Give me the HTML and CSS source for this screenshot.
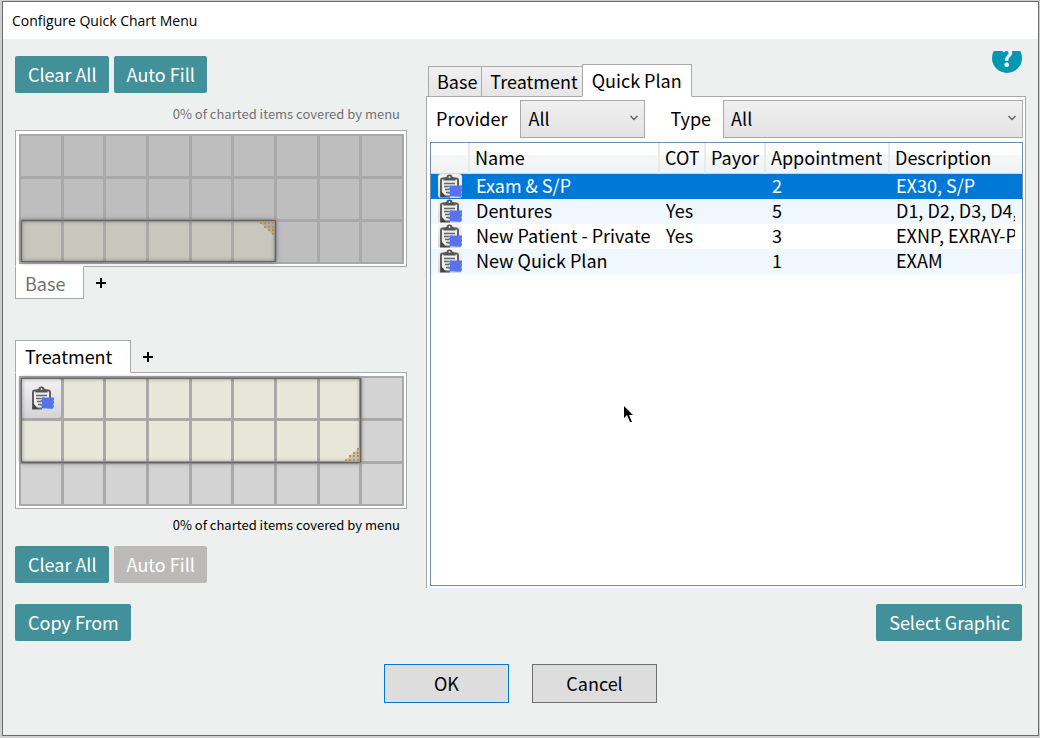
FILE: index.html
```html
<!DOCTYPE html>
<html lang="en">
<head>
  <meta charset="UTF-8" />
  <meta name="viewport" content="width=device-width, initial-scale=1" />
  <title>Configure Quick Chart Menu</title>
  <link rel="stylesheet" href="styles.css">
</head>
<body>

  <svg class="defs" width="0" height="0" aria-hidden="true">
    <symbol id="plan" viewBox="0 0 24 24">
      <path d="M3 5h17v18H3z" fill="#eee" />
      <path d="M6 4.500H4.500Q3 4.500 3 6.500V22.500h9M17 4.500h1.500Q20 4.500 20 6.500V12" fill="none" stroke="#5f5f5f" stroke-width="2" />
      <path d="M5.500 6.500V3.500L8.500 3a3 2.600 0 0 1 6 0l3 .5v3z" fill="#555" />
      <circle cx="11.500" cy="3" r="1" fill="#ddd" />
      <path d="M6 9.500h11M6 12.500h8M7 15.500h4M8 18.500h3" stroke="#666" stroke-width="1.500" />
      <path d="M3 17l5.500 6H3z" fill="#444" />
      <path d="M12 11.500h12v2l-.5 1 .5 2-.7 2 .7 2-1 2H11l1-2-1.500-1.500L12 17l-1.500-2.500 1.500-1z" fill="#5a70ee" />
      <path d="M10 12.500h4M20 15.500h4M9.500 19h5M17 22h6" stroke="#3c88ee" stroke-width="1" />
    </symbol>
  </svg>

  <div class="window">
    <header class="title-bar">Configure Quick Chart Menu</header>

    <main class="content">
      <section class="charts">
        <div class="btn-row">
          <button class="btn" type="button">Clear All</button>
          <button class="btn" type="button">Auto Fill</button>
        </div>
        <p class="coverage dim">0% of charted items covered by menu</p>

        <div class="panel">
          <div class="cells dark">
            <i></i><i></i><i></i><i></i><i></i><i></i><i></i><i></i><i></i>
            <i></i><i></i><i></i><i></i><i></i><i></i><i></i><i></i><i></i>
            <i class="on"></i><i class="on"></i><i class="on"></i><i class="on"></i><i class="on"></i><i class="on"></i><i></i><i></i><i></i>
            <div class="area area-base">
              <svg class="grip grip-top" width="16" height="15" viewBox="0 0 16 15">
                <path d="M0 0h16v15z" fill="#999" fill-opacity=".6" />
                <path d="M1 2h15M5 6h11M9 9h7M13 13h3" stroke="#d08a35" stroke-width="2" stroke-dasharray="2 2" />
              </svg>
            </div>
          </div>
        </div>
        <div class="chart-tabs below">
          <button class="chart-tab base dim" type="button">Base</button>
          <button class="add" type="button" aria-label="Add base tab"></button>
        </div>

        <div class="chart-tabs above">
          <button class="chart-tab treatment" type="button">Treatment</button>
          <button class="add" type="button" aria-label="Add treatment tab"></button>
        </div>
        <div class="panel">
          <div class="cells">
            <i class="item"><svg width="24" height="24"><use href="#plan" /></svg></i><i class="on"></i><i class="on"></i><i class="on"></i><i class="on"></i><i class="on"></i><i class="on"></i><i class="on"></i><i></i>
            <i class="on"></i><i class="on"></i><i class="on"></i><i class="on"></i><i class="on"></i><i class="on"></i><i class="on"></i><i class="on"></i><i></i>
            <i></i><i></i><i></i><i></i><i></i><i></i><i></i><i></i><i></i>
            <div class="area area-treatment">
              <svg class="grip grip-bottom" width="16" height="15" viewBox="0 0 16 15">
                <path d="M0 15h16V0z" fill="#aaa" fill-opacity=".6" />
                <path d="M13 2h3M9 6h7M5 9h11M1 13h15" stroke="#d08a35" stroke-width="2" stroke-dasharray="2 2" />
              </svg>
            </div>
          </div>
        </div>
        <p class="coverage">0% of charted items covered by menu</p>
        <div class="btn-row">
          <button class="btn" type="button">Clear All</button>
          <button class="btn" type="button" disabled>Auto Fill</button>
        </div>
      </section>

      <section class="library">
        <div class="library-top">
          <div class="tabs" role="tablist">
            <button class="tab" type="button" role="tab">Base</button>
            <button class="tab" type="button" role="tab">Treatment</button>
            <button class="tab active" type="button" role="tab" aria-selected="true">Quick Plan</button>
          </div>
          <button class="help" type="button"><span>?</span></button>
        </div>

        <div class="plans">
          <div class="filters">
            <label for="provider">Provider</label>
            <div class="select provider">
              <select id="provider"><option>All</option></select>
              <svg width="8" height="6" viewBox="0 0 8 6"><path d="M.5 1L4 4.500 7.500 1" fill="none" stroke="#606060" stroke-width="1.500" /></svg>
            </div>
            <label class="type-label" for="type">Type</label>
            <div class="select type">
              <select id="type"><option>All</option></select>
              <svg width="8" height="6" viewBox="0 0 8 6"><path d="M.5 1L4 4.500 7.500 1" fill="none" stroke="#606060" stroke-width="1.500" /></svg>
            </div>
          </div>

          <div class="list">
            <table>
              <colgroup>
                <col class="c-icon"><col class="c-name"><col class="c-cot"><col class="c-payor"><col class="c-appt"><col>
              </colgroup>
              <thead>
                <tr><th></th><th>Name</th><th>COT</th><th>Payor</th><th>Appointment</th><th>Description</th></tr>
              </thead>
              <tbody>
                <tr class="selected">
                  <td class="icon-cell"><span class="icon"><svg width="24" height="24"><use href="#plan" /></svg></span></td>
                  <td>Exam &amp; S/P</td><td></td><td></td><td>2</td><td><div class="clip">EX30, S/P</div></td>
                </tr>
                <tr>
                  <td class="icon-cell"><span class="icon"><svg width="24" height="24"><use href="#plan" /></svg></span></td>
                  <td>Dentures</td><td>Yes</td><td></td><td>5</td><td><div class="clip">D1, D2, D3, D4,</div></td>
                </tr>
                <tr>
                  <td class="icon-cell"><span class="icon"><svg width="24" height="24"><use href="#plan" /></svg></span></td>
                  <td>New Patient - Private</td><td>Yes</td><td></td><td>3</td><td><div class="clip">EXNP, EXRAY-P</div></td>
                </tr>
                <tr>
                  <td class="icon-cell"><span class="icon"><svg width="24" height="24"><use href="#plan" /></svg></span></td>
                  <td>New Quick Plan</td><td></td><td></td><td>1</td><td><div class="clip">EXAM</div></td>
                </tr>
              </tbody>
            </table>
          </div>
        </div>
      </section>
    </main>

    <div class="actions">
      <button class="btn" type="button">Copy From</button>
      <button class="btn" type="button">Select Graphic</button>
    </div>

    <footer class="dialog-buttons">
      <button class="plain default" type="button">OK</button>
      <button class="plain" type="button">Cancel</button>
    </footer>
  </div>

  <svg class="pointer" width="10" height="17" viewBox="0 0 10 17" aria-hidden="true">
    <path d="M0 0v12l3-3 3 7h2L5 9h4z" />
  </svg>

</body>
</html>
```

FILE: styles.css
```css
* {
  box-sizing: border-box;
}

body {
  margin: 0;
  padding: 1px 1px 2px 2px;
  background: #cfcfcf;
  font-family: "Noto Sans CJK SC", "Noto Sans", sans-serif;
  font-size: 18px;
  line-height: 24px;
  color: #000;
}

button,
select {
  font: inherit;
  color: inherit;
}

p {
  margin: 0;
}

.defs {
  position: absolute;
}

.window {
  min-height: calc(100vh - 3px);
  border: 1px solid #6b6b6b;
  background: #eef0f0;
}

.title-bar {
  height: 37px;
  padding: 0 9px;
  background: #fff;
  font-family: "Open Sans", "Noto Sans", sans-serif;
  font-size: 14px;
  line-height: 37px;
}

.content {
  display: flex;
  gap: 19px;
  padding: 12px 12px 0;
}

/* buttons */
.btn-row {
  display: flex;
  gap: 5px;
}

.btn {
  height: 37px;
  padding: 0 12px 2px 13px;
  border: none;
  border-radius: 2px;
  background: #42919a;
  color: #fff;
}

.btn:disabled {
  background: #bcbab8;
}

/* left side */
.charts {
  flex: 0 0 392px;
  padding: 5px 0;
}

.coverage {
  padding: 8px 7px 14px 0;
  font-size: 13px;
  line-height: 15px;
  text-align: right;
}

.btn-row + .coverage {
  padding-top: 13px;
  padding-bottom: 9px;
}

.dim {
  color: #707070;
}

.panel {
  padding: 3px 2px 2px 3px;
  border: 1px solid #a9a9a9;
  background: #fff;
}

.cells {
  position: relative;
  display: grid;
  grid-template-columns: repeat(9, 1fr);
  grid-auto-rows: 40px;
  gap: 3px;
  padding: 2px;
  background: #a9a9a9;
}

.cells i {
  background: #d3d3d3;
}

.cells .on {
  background: #e6e7d8;
}

.cells.dark i {
  background: #bebebe;
}

.cells.dark .on {
  background: #c7c7be;
}

.cells .item {
  display: flex;
  align-items: center;
  justify-content: center;
  padding-left: 3px;
  border-radius: 3px;
  background: linear-gradient(#f4f4f6, #d4d4d6);
}

.area {
  position: absolute;
  border: 1px solid #666;
  box-shadow: 0 0 4px #666, inset 0 0 4px rgba(0, 0, 0, 0.35);
}

.area-base {
  grid-area: 3 / 1 / 4 / 7;
  inset: -2px -2px 0 0;
}

.area-treatment {
  grid-area: 1 / 1 / 3 / 9;
  inset: 0 -2px -2px 0;
}

.grip {
  position: absolute;
  right: 0;
}

.grip-top {
  top: 0;
}

.grip-bottom {
  bottom: 0;
}

.chart-tabs {
  position: relative;
  display: flex;
  gap: 10px;
}

.chart-tab {
  height: 33px;
  padding: 0 9px;
  border: 1px solid #a9a9a9;
  background: #fff;
  text-align: left;
}

.chart-tab.dim {
  color: #707070;
}

.base {
  width: 69px;
}

.treatment {
  width: 116px;
}

.below {
  margin-top: -1px;
}

.below .chart-tab {
  border-top-color: #fff;
}

.above {
  margin: 41px 0 -1px;
}

.above .chart-tab {
  padding-bottom: 2px;
  border-bottom-color: #fff;
}

.add {
  align-self: center;
  width: 14px;
  height: 14px;
  border: none;
  background:
    linear-gradient(#000, #000) center / 10px 2px no-repeat,
    linear-gradient(#000, #000) center / 2px 10px no-repeat;
}

/* right side */
.library {
  flex: 1;
  min-width: 0;
  display: flex;
  flex-direction: column;
}

.library-top {
  display: flex;
  justify-content: space-between;
  height: 46px;
  padding: 0 4px 0 2px;
}

.tabs {
  position: relative;
  display: flex;
  align-items: flex-end;
}

.tab {
  height: 31px;
  padding: 0 4px 2px 8px;
  border: 1px solid #a9a9a9;
  border-right: none;
  background: linear-gradient(#f0f0f0, #e6e6e6);
}

.tab.active {
  height: 33px;
  padding: 0 9px 2px;
  border-right: 1px solid #a9a9a9;
  border-bottom-color: #fff;
  background: #fff;
}

.help {
  display: flex;
  align-items: flex-end;
  width: 30px;
  height: 22px;
  padding: 0;
  border: none;
  background: none;
  color: #fff;
  font-size: 24px;
  font-weight: 700;
  overflow: hidden;
}

.help span {
  flex: none;
  width: 30px;
  height: 30px;
  border-radius: 50%;
  background: #0097b2;
  line-height: 28px;
}

.plans {
  flex: 1;
  display: flex;
  flex-direction: column;
  margin-top: -1px;
  padding: 3px 2px 2px 3px;
  border: 1px solid #a9a9a9;
  border-bottom: none;
  background: #fff;
}

.filters {
  display: flex;
  align-items: center;
  padding-left: 6px;
}

.filters label {
  padding-bottom: 2px;
}

.provider {
  width: 125px;
  margin-left: 13px;
}

.type-label {
  margin-left: 25px;
}

.type {
  flex: 1;
  margin-left: 12px;
}

.select {
  position: relative;
}

.select select {
  display: block;
  width: 100%;
  height: 38px;
  padding: 0 7px 2px;
  border: 1px solid #a9a9a9;
  border-radius: 0;
  background: linear-gradient(#f0f0f0, #e3e3e3);
  appearance: none;
}

.select svg {
  position: absolute;
  top: 15px;
  right: 7px;
  pointer-events: none;
}

.list {
  flex: 1;
  margin-top: 4px;
  border: 1px solid #6a8db0;
}

table {
  width: 100%;
  table-layout: fixed;
  border-collapse: collapse;
}

.c-icon {
  width: 38px;
}

.c-name {
  width: 190px;
}

.c-cot {
  width: 46px;
}

.c-payor {
  width: 60px;
}

.c-appt {
  width: 124px;
}

th {
  height: 30px;
  padding: 0 0 2px 5px;
  border-right: 2px solid #e9eaeb;
  border-bottom: 1px solid #d5d5d5;
  background: linear-gradient(#fff 40%, #f6f7f8 41%, #f1f2f4);
  font-weight: 400;
  text-align: left;
  white-space: nowrap;
}

th:last-child {
  border-right: none;
}

td {
  height: 25px;
  padding: 0 0 2px 7px;
  line-height: 23px;
  white-space: nowrap;
}

.icon-cell {
  padding: 0 0 0 7px;
}

tbody tr:nth-child(even) {
  background: #f0f7fe;
}

.selected {
  background: #0078d7;
  color: #fff;
}

.icon {
  display: block;
  width: 24px;
  height: 24px;
  border-radius: 3px;
  background: linear-gradient(#f4f4f4, #d8d8d8);
}

.icon svg {
  display: block;
}

.clip {
  margin-right: 7px;
  overflow-x: clip;
}

/* bottom */
.actions {
  display: flex;
  justify-content: space-between;
  padding: 16px 16px 0 12px;
}

.dialog-buttons {
  display: flex;
  justify-content: center;
  gap: 23px;
  padding: 23px 0 32px;
}

.plain {
  width: 125px;
  height: 39px;
  padding-bottom: 2px;
  border: 1px solid #707070;
  background: #ddd;
}

.plain.default {
  border-color: #0078d7;
}

.pointer {
  position: absolute;
  left: 624px;
  top: 406px;
}
```
